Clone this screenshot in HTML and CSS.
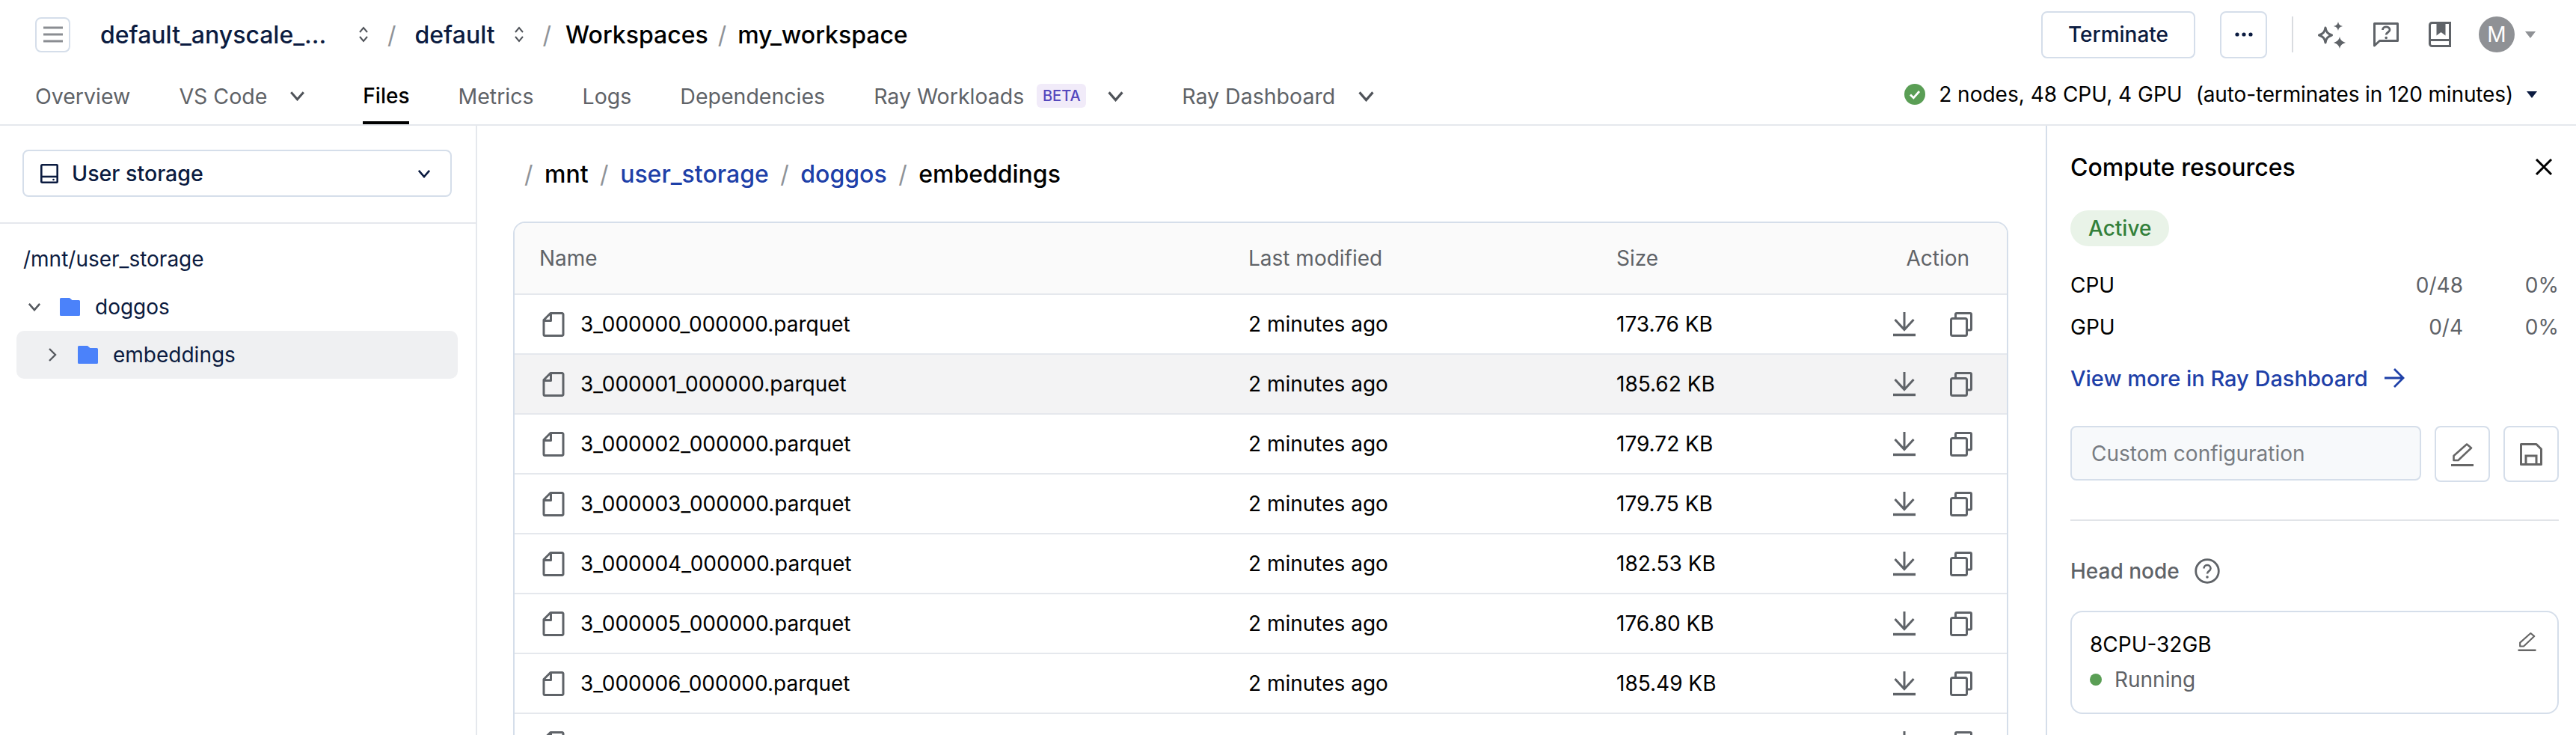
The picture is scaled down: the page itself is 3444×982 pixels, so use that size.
FILE: index.html
```html
<!DOCTYPE html>
<html lang="en-US">
  <head>
    <meta charset="UTF-8" />
    <meta name="viewport" content="width=device-width, initial-scale=1" />
    <title>my_workspace - Files</title>
    <link rel="stylesheet" href="styles.css">
  </head>
  <body>
    <svg class="icon-defs" aria-hidden="true">
      <symbol id="i-updown" viewBox="0 0 16 24"><path d="M3 9l5-6 5 6M3 15l5 6 5-6" fill="none" stroke="currentColor" stroke-width="2"/></symbol>
      <symbol id="i-down" viewBox="0 0 24 16"><path d="M2.500 2.500L12 13.500 21.500 2.500" fill="none" stroke="currentColor" stroke-width="3.400"/></symbol>
      <symbol id="i-right" viewBox="0 0 12 18"><path d="M2 1l8 8-8 8" fill="none" stroke="currentColor" stroke-width="2.400"/></symbol>
      <symbol id="i-folder" viewBox="0 0 27 24"><path d="M0 1.500A1.500 1.500 0 0 1 1.500 0H13l3.500 3H25.500A1.500 1.500 0 0 1 27 4.500V22.500A1.500 1.500 0 0 1 25.500 24H1.500A1.500 1.500 0 0 1 0 22.500z" fill="#4b82fa"/></symbol>
      <symbol id="i-file" viewBox="0 0 30 33"><path d="M11 1.500H26.500a1.500 1.500 0 0 1 1.500 1.500V30a1.500 1.500 0 0 1-1.500 1.500H3.500A1.500 1.500 0 0 1 2 30V10.500zM11.500 2V11.500H2" fill="none" stroke="currentColor" stroke-width="3" stroke-linejoin="round"/></symbol>
      <symbol id="i-download" viewBox="0 0 30 33"><path d="M15 0v24M2.500 10L15 23.500 27.500 10" fill="none" stroke="currentColor" stroke-width="3"/><path d="M0 30.500h30" stroke="currentColor" stroke-width="3.400"/></symbol>
      <symbol id="i-copy" viewBox="0 0 30 33"><path d="M7.500 8V3a1.500 1.500 0 0 1 1.500-1.500H27A1.500 1.500 0 0 1 28.500 3V22.500A1.500 1.500 0 0 1 27 24H22.500" fill="none" stroke="currentColor" stroke-width="3"/><rect x="1.500" y="8.500" width="21" height="23" rx="2" fill="none" stroke="currentColor" stroke-width="3"/></symbol>
      <symbol id="i-pencil" viewBox="0 0 30 32"><path d="M21 2.500l6 5L9.500 24H3.500v-6z" fill="none" stroke="currentColor" stroke-width="2.600" stroke-linejoin="round"/><path d="M0 30.500h30" stroke="currentColor" stroke-width="3"/></symbol>
    </svg>

    <header class="topbar">
      <div class="topbar-row">
        <button class="menu-btn" aria-label="Menu">
          <svg width="26" height="22" viewBox="0 0 26 22"><path d="M0 2h26M0 11h26M0 20h26" stroke="#8a8d92" stroke-width="3"/></svg>
        </button>
        <nav class="crumbs">
          <span class="crumb navy crumb-cloud">default_anyscale_...</span>
          <svg class="updown" width="16" height="24"><use href="#i-updown"/></svg>
          <span class="crumb-sep">/</span>
          <span class="crumb navy">default</span>
          <svg class="updown near" width="16" height="24"><use href="#i-updown"/></svg>
          <span class="crumb-sep near">/</span>
          <span class="crumb">Workspaces</span>
          <span class="crumb-sep tight">/</span>
          <span class="crumb">my_workspace</span>
        </nav>
        <div class="top-actions">
          <button class="btn terminate">Terminate</button>
          <button class="btn more" aria-label="More">
            <svg width="24" height="6" viewBox="0 0 24 6"><circle cx="3" cy="3" r="2.600" fill="#0b1b40"/><circle cx="12" cy="3" r="2.600" fill="#0b1b40"/><circle cx="21" cy="3" r="2.600" fill="#0b1b40"/></svg>
          </button>
          <span class="top-divider"></span>
          <svg class="top-icon" width="37" height="37" viewBox="0 0 37 37">
            <path d="M10 9c1 6 3 8 8.500 10C13 21 11 23 10 29 9 23 7 21 1.500 19 7 17 9 15 10 9z" fill="none" stroke="#5f6368" stroke-width="3" stroke-linejoin="round"/>
            <path d="M27 1c.8 3.500 2 5 6 6-4 1-5.200 2.500-6 6-.8-3.500-2-5-6-6 4-1 5.200-2.500 6-6zM29 21c1 4 2.400 6 8 8-5.600 2-7 4-8 8-1-4-2.400-6-8-8 5.600-2 7-4 8-8z" fill="#5f6368"/>
          </svg>
          <svg class="top-icon help" width="34" height="33" viewBox="0 0 34 33">
            <path d="M1.500 1.500h31v23H8.500l-7 6.500z" fill="none" stroke="#5f6368" stroke-width="3" stroke-linejoin="round"/>
            <path d="M12.500 10c0-5.500 9.500-5.500 9.500 0 0 3-4.800 3-4.800 6.500" fill="none" stroke="#5f6368" stroke-width="2.800"/>
            <circle cx="17.200" cy="20.500" r="1.800" fill="#5f6368"/>
          </svg>
          <svg class="top-icon book" width="30" height="34" viewBox="0 0 30 34">
            <path d="M4.500 1.500h24v31h-24a3 3 0 0 1-3-3v-25a3 3 0 0 1 3-3z" fill="none" stroke="#5f6368" stroke-width="3"/>
            <path d="M2 24.500h27" stroke="#5f6368" stroke-width="3"/>
            <path d="M10.500 1h12v17.500l-6-4.500-6 4.500z" fill="#5f6368"/>
          </svg>
          <span class="avatar">M</span>
          <span class="caret gray"></span>
        </div>
      </div>
      <div class="tabs">
        <span class="tab">Overview</span>
        <span class="tab tab-menu">VS Code <svg width="21" height="14"><use href="#i-down"/></svg></span>
        <span class="tab active">Files</span>
        <span class="tab">Metrics</span>
        <span class="tab">Logs</span>
        <span class="tab">Dependencies</span>
        <span class="tab tab-menu">Ray Workloads <b class="beta">BETA</b> <svg class="beta-chevron" width="23" height="15"><use href="#i-down"/></svg></span>
        <span class="tab tab-menu">Ray Dashboard <svg width="23" height="15"><use href="#i-down"/></svg></span>
        <div class="cluster-status">
          <svg width="28" height="28" viewBox="0 0 28 28"><circle cx="14" cy="14" r="14" fill="#5a9e55"/><path d="M8 14.500l4.300 4.300L20 10" fill="none" stroke="#fff" stroke-width="2.800"/></svg>
          <span>2 nodes, 48 CPU, 4 GPU</span>
          <span class="auto-term">(auto-terminates in 120 minutes)</span>
          <span class="caret navy-caret"></span>
        </div>
      </div>
    </header>

    <div class="workspace">
      <aside class="sidebar">
        <div class="storage-section">
          <div class="storage-select">
            <svg width="24" height="26" viewBox="0 0 24 26"><rect x="1.300" y="1.300" width="21.400" height="23.400" rx="1" fill="none" stroke="#0b1b40" stroke-width="2.600"/><path d="M1 17h22" stroke="#0b1b40" stroke-width="2.600"/><circle cx="17.500" cy="21" r="1.300" fill="#0b1b40"/></svg>
            <span>User storage</span>
            <svg class="select-chevron" width="18" height="12"><use href="#i-down"/></svg>
          </div>
        </div>
        <div class="tree-path">/mnt/user_storage</div>
        <ul class="tree">
          <li class="tree-row">
            <svg class="tree-chevron" width="18" height="12"><use href="#i-down"/></svg>
            <svg width="27" height="24"><use href="#i-folder"/></svg>
            <span>doggos</span>
          </li>
          <li class="tree-row nested selected">
            <svg class="tree-chevron" width="12" height="18"><use href="#i-right"/></svg>
            <svg width="27" height="24"><use href="#i-folder"/></svg>
            <span>embeddings</span>
          </li>
        </ul>
      </aside>

      <main class="files">
        <nav class="path-bar">
          <span class="path-sep">/</span>
          <span>mnt</span>
          <span class="path-sep">/</span>
          <a>user_storage</a>
          <span class="path-sep">/</span>
          <a>doggos</a>
          <span class="path-sep">/</span>
          <span>embeddings</span>
        </nav>
        <div class="file-table">
          <div class="file-row file-head">
            <span>Name</span>
            <span>Last modified</span>
            <span>Size</span>
            <span class="head-action">Action</span>
          </div>
          <div class="file-row">
            <span class="file-name"><svg width="30" height="33"><use href="#i-file"/></svg>3_000000_000000.parquet</span>
            <span>2 minutes ago</span>
            <span>173.76 KB</span>
            <span class="file-actions"><svg width="30" height="33"><use href="#i-download"/></svg><svg width="30" height="33"><use href="#i-copy"/></svg></span>
          </div>
          <div class="file-row hovered">
            <span class="file-name"><svg width="30" height="33"><use href="#i-file"/></svg>3_000001_000000.parquet</span>
            <span>2 minutes ago</span>
            <span>185.62 KB</span>
            <span class="file-actions"><svg width="30" height="33"><use href="#i-download"/></svg><svg width="30" height="33"><use href="#i-copy"/></svg></span>
          </div>
          <div class="file-row">
            <span class="file-name"><svg width="30" height="33"><use href="#i-file"/></svg>3_000002_000000.parquet</span>
            <span>2 minutes ago</span>
            <span>179.72 KB</span>
            <span class="file-actions"><svg width="30" height="33"><use href="#i-download"/></svg><svg width="30" height="33"><use href="#i-copy"/></svg></span>
          </div>
          <div class="file-row">
            <span class="file-name"><svg width="30" height="33"><use href="#i-file"/></svg>3_000003_000000.parquet</span>
            <span>2 minutes ago</span>
            <span>179.75 KB</span>
            <span class="file-actions"><svg width="30" height="33"><use href="#i-download"/></svg><svg width="30" height="33"><use href="#i-copy"/></svg></span>
          </div>
          <div class="file-row">
            <span class="file-name"><svg width="30" height="33"><use href="#i-file"/></svg>3_000004_000000.parquet</span>
            <span>2 minutes ago</span>
            <span>182.53 KB</span>
            <span class="file-actions"><svg width="30" height="33"><use href="#i-download"/></svg><svg width="30" height="33"><use href="#i-copy"/></svg></span>
          </div>
          <div class="file-row">
            <span class="file-name"><svg width="30" height="33"><use href="#i-file"/></svg>3_000005_000000.parquet</span>
            <span>2 minutes ago</span>
            <span>176.80 KB</span>
            <span class="file-actions"><svg width="30" height="33"><use href="#i-download"/></svg><svg width="30" height="33"><use href="#i-copy"/></svg></span>
          </div>
          <div class="file-row">
            <span class="file-name"><svg width="30" height="33"><use href="#i-file"/></svg>3_000006_000000.parquet</span>
            <span>2 minutes ago</span>
            <span>185.49 KB</span>
            <span class="file-actions"><svg width="30" height="33"><use href="#i-download"/></svg><svg width="30" height="33"><use href="#i-copy"/></svg></span>
          </div>
          <!-- only the tops of the icons show above the fold here -->
          <div class="file-row">
            <span class="file-name"><svg width="30" height="33"><use href="#i-file"/></svg></span>
            <span></span>
            <span></span>
            <span class="file-actions"><svg width="30" height="33"><use href="#i-download"/></svg><svg width="30" height="33"><use href="#i-copy"/></svg></span>
          </div>
        </div>
      </main>

      <aside class="compute">
        <div class="compute-title">
          <h2>Compute resources</h2>
          <svg width="24" height="22" viewBox="0 0 24 22"><path d="M2 1l20 20M22 1L2 21" stroke="#000" stroke-width="3"/></svg>
        </div>
        <span class="pill">Active</span>
        <div class="usage">
          <div class="usage-row"><span class="usage-name">CPU</span><span class="usage-count">0/48</span><span class="usage-pct">0%</span></div>
          <div class="usage-row"><span class="usage-name">GPU</span><span class="usage-count">0/4</span><span class="usage-pct">0%</span></div>
        </div>
        <a class="dash-link">View more in Ray Dashboard
          <svg width="28" height="26" viewBox="0 0 28 26"><path d="M1 13h25M14 1l12 12-12 12" fill="none" stroke="#1e40a8" stroke-width="2.800"/></svg>
        </a>
        <div class="config-row">
          <div class="config-input">Custom configuration</div>
          <button class="icon-btn"><svg width="30" height="32"><use href="#i-pencil"/></svg></button>
          <button class="icon-btn">
            <svg width="30" height="30" viewBox="0 0 30 30"><path d="M1.500 1.500H22l6.500 6.500v20.500H1.500z" fill="none" stroke="#666" stroke-width="3" stroke-linejoin="round"/><path d="M8 28V17h14v11" fill="none" stroke="#666" stroke-width="3"/></svg>
          </button>
        </div>
        <hr class="compute-divider">
        <div class="node-label">
          <span>Head node</span>
          <svg width="34" height="34" viewBox="0 0 34 34"><circle cx="17" cy="17" r="15.300" fill="none" stroke="#5f6368" stroke-width="2.800"/><path d="M12.500 13.500c0-6 9-6 9 0 0 3.500-4.500 3.500-4.500 7" fill="none" stroke="#5f6368" stroke-width="2.600"/><circle cx="17" cy="25" r="1.800" fill="#5f6368"/></svg>
        </div>
        <div class="node-card">
          <div class="node-head">
            <span>8CPU-32GB</span>
            <svg width="25" height="26" viewBox="0 0 30 32"><use href="#i-pencil"/></svg>
          </div>
          <div class="node-state"><i class="dot"></i>Running</div>
        </div>
      </aside>
    </div>
  </body>
</html>
```

FILE: styles.css
```css
* {
  box-sizing: border-box;
}

html,
body {
  height: 100%;
}

body {
  margin: 0;
  overflow: hidden;
  display: flex;
  flex-direction: column;
  font-family: Inter, "Noto Sans", sans-serif;
  font-size: 28px;
  color: #000;
  background-color: #fff;
}

.icon-defs {
  display: none;
}

button {
  font-family: inherit;
  background-color: #fff;
  cursor: pointer;
}

svg {
  display: block;
  flex-shrink: 0;
}

/* Top bar */
.topbar {
  height: 168px;
  flex-shrink: 0;
  border-bottom: 2px solid #e5e8ed;
}

.topbar-row {
  height: 92px;
  display: flex;
  align-items: center;
  padding-left: 47px;
}

.menu-btn {
  width: 47px;
  height: 47px;
  padding: 0;
  display: flex;
  align-items: center;
  justify-content: center;
  border: 2px solid #d5deea;
  border-radius: 8px;
}

.crumbs {
  display: flex;
  align-items: center;
  margin-left: 40px;
  font-size: 32px;
  font-weight: 500;
}

.crumb {
  white-space: nowrap;
}

.crumb.navy {
  color: #0b1b40;
}

.crumb-cloud {
  width: 311px;
}

.updown {
  margin-left: 33px;
  color: #50545a;
}

.updown.near {
  margin-left: 24px;
}

.crumb-sep {
  margin: 0 25px 0 24px;
  color: #8f9398;
  font-weight: 400;
}

.crumb-sep.near {
  margin-right: 19px;
}

.crumb-sep.tight {
  margin: 0 15px 0 13px;
}

.top-actions {
  margin-left: auto;
  display: flex;
  align-items: center;
}

.btn {
  height: 63px;
  border: 2px solid #d5deea;
  border-radius: 8px;
  color: #0b1b40;
  font-size: 28px;
  font-weight: 500;
}

.terminate {
  width: 206px;
}

.more {
  width: 63px;
  margin-left: 33px;
  display: flex;
  align-items: center;
  justify-content: center;
}

.top-divider {
  width: 2px;
  height: 48px;
  margin: 0 33px;
  background-color: #d9dce0;
}

.help {
  margin-left: 37px;
}

.book {
  margin-left: 40px;
}

.avatar {
  width: 48px;
  height: 48px;
  margin-left: 37px;
  border-radius: 50%;
  display: flex;
  align-items: center;
  justify-content: center;
  background-color: #8f9195;
  color: #fff;
  font-size: 28px;
}

.caret {
  width: 0;
  height: 0;
  border-left: 7px solid transparent;
  border-right: 7px solid transparent;
  border-top: 9px solid #0b1b40;
}

.caret.gray {
  margin: 0 54px 0 14px;
  border-top-color: #8f9195;
}

.tabs {
  height: 74px;
  display: flex;
  align-items: stretch;
  padding-left: 47px;
}

.tab {
  display: flex;
  align-items: center;
  margin-right: 65px;
  padding-bottom: 2px;
  color: #5f6368;
  font-size: 28.500px;
  white-space: nowrap;
}

.tab.active {
  color: #000;
  font-size: 28px;
  font-weight: 500;
  box-shadow: inset 0 -4px 0 #000;
}

.tab-menu {
  margin-right: 77px;
}

.tab-menu svg {
  margin-left: 30px;
  color: #4f5359;
}

.tab-menu .beta-chevron {
  margin-left: 28px;
}

.beta {
  width: 66px;
  height: 32px;
  margin-left: 17px;
  line-height: 32px;
  text-align: center;
  border-radius: 6px;
  background-color: #f1ebf9;
  color: #5548bd;
  font-size: 20px;
  font-weight: 500;
}

.cluster-status {
  margin-left: auto;
  margin-right: 52px;
  display: flex;
  align-items: center;
  padding-bottom: 6px;
  color: #000;
  font-size: 28px;
  white-space: nowrap;
}

.cluster-status svg {
  margin-right: 18px;
}

.auto-term {
  margin-left: 18px;
  letter-spacing: -0.13px;
}

.navy-caret {
  margin-left: 18px;
}

/* Main columns */
.workspace {
  flex: 1;
  min-height: 0;
  display: flex;
}

.sidebar {
  width: 638px;
  flex-shrink: 0;
  border-right: 2px solid #e5e8ed;
}

.storage-section {
  padding: 32px 32px 34px 30px;
  border-bottom: 2px solid #e5e8ed;
}

.storage-select {
  height: 63px;
  display: flex;
  align-items: center;
  gap: 18px;
  padding: 0 26px 0 22px;
  border: 2px solid #d5deea;
  border-radius: 8px;
  color: #0b1b40;
  font-size: 28.600px;
  font-weight: 500;
}

.select-chevron {
  margin-left: auto;
}

.tree-path {
  height: 40px;
  line-height: 40px;
  margin: 27px 0 12px 31px;
  color: #0b1b40;
}

.tree {
  margin: 0 24px 0 22px;
  padding: 0;
  list-style: none;
  color: #0b1b40;
}

.tree-row {
  height: 64px;
  display: flex;
  align-items: center;
  padding-left: 15px;
  border-radius: 10px;
}

.tree-row .tree-chevron {
  margin-right: 25px;
  color: #55595f;
}

.tree-row span {
  margin-left: 20px;
}

.tree-row.nested {
  padding-left: 42px;
}

.tree-row.nested .tree-chevron {
  margin-right: 28px;
}

.selected {
  background-color: #eff0f2;
}

/* File list */
.files {
  flex: 1;
  min-width: 0;
  padding: 0 50px 0 48px;
}

.path-bar {
  height: 128px;
  display: flex;
  align-items: center;
  gap: 15.500px;
  padding-left: 15px;
  font-size: 32px;
  font-weight: 500;
}

.path-bar a {
  color: #1e40a8;
}

.path-sep {
  color: #8f9398;
  font-weight: 400;
}

.file-table {
  border: 2px solid #d5deea;
  border-radius: 16px 16px 0 0;
  overflow: hidden;
}

.file-row {
  height: 80px;
  display: grid;
  grid-template-columns: 948px 492px 1fr auto;
  align-items: center;
  padding: 0 46px 0 33px;
  border-bottom: 2px solid #e5e8ed;
}

.file-head {
  height: 96px;
  background-color: #fafafa;
  color: #5f6368;
}

.head-action {
  margin-right: 4px;
}

.hovered {
  background-color: #f3f3f4;
}

.file-name {
  display: flex;
  align-items: center;
  gap: 21px;
  padding-left: 4px;
}

.file-name svg,
.file-actions svg {
  color: #5f6368;
}

.file-actions {
  display: flex;
  gap: 46px;
}

/* Compute panel */
.compute {
  width: 709px;
  flex-shrink: 0;
  padding: 36px 23px 0 31px;
  border-left: 2px solid #d5deea;
}

.compute-title {
  height: 38px;
  display: flex;
  align-items: center;
  justify-content: space-between;
  padding-right: 8px;
}

.compute-title h2 {
  margin: 0;
  font-size: 32px;
  font-weight: 500;
}

.pill {
  display: inline-flex;
  align-items: center;
  height: 48px;
  margin-top: 39px;
  padding: 0 24px;
  border-radius: 24px;
  background-color: #e9f3e8;
  color: #33803a;
  font-weight: 500;
}

.usage {
  margin-top: 24px;
}

.usage-row {
  height: 56px;
  display: flex;
  align-items: center;
}

.usage-count {
  margin-left: auto;
  color: #5f6368;
}

.usage-pct {
  width: 128px;
  text-align: right;
  color: #5f6368;
}

.dash-link {
  height: 40px;
  margin-top: 20px;
  display: flex;
  align-items: center;
  gap: 21px;
  color: #1e40a8;
  font-size: 29px;
  font-weight: 500;
}

.config-row {
  margin-top: 44px;
  display: flex;
  gap: 18px;
}

.config-input {
  width: 469px;
  height: 73px;
  display: flex;
  align-items: center;
  padding-left: 26px;
  border: 2px solid #d5deea;
  border-radius: 8px;
  background-color: #f7f9fb;
  color: #787c82;
}

.icon-btn {
  width: 74px;
  height: 75px;
  padding: 0;
  display: flex;
  align-items: center;
  justify-content: center;
  border: 2px solid #d5deea;
  border-radius: 8px;
  color: #666;
}

.compute-divider {
  height: 2px;
  margin: 50px 0 0;
  border: none;
  background-color: #e1e4e8;
}

.node-label {
  height: 34px;
  margin-top: 50px;
  display: flex;
  align-items: center;
  gap: 20px;
  color: #5f6368;
  font-weight: 500;
}

.node-card {
  height: 138px;
  margin-top: 36px;
  padding: 26px 28px 0 24px;
  border: 2px solid #d5deea;
  border-radius: 16px;
}

.node-head {
  display: flex;
  align-items: flex-start;
  justify-content: space-between;
  color: #000;
}

.node-head svg {
  color: #666;
}

.node-state {
  margin-top: 13px;
  display: flex;
  align-items: center;
  gap: 17px;
  color: #5f6368;
}

.dot {
  width: 16px;
  height: 16px;
  border-radius: 50%;
  background-color: #5a9e55;
}
```
